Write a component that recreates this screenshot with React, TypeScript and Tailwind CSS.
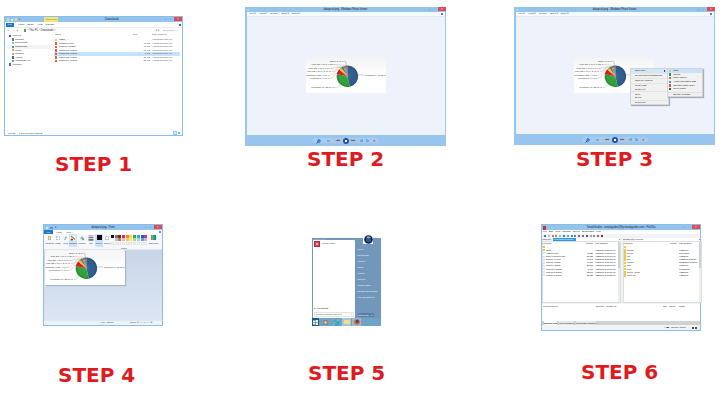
import type { ReactNode } from "react";

/* ---------- shared pieces ---------- */

function Step({ n, className }: { n: number; className: string }) {
  return (
    <h2 className={`font-['DejaVu_Sans',sans-serif] text-[20px] font-bold leading-[24px] whitespace-nowrap text-[#df1b1f] ${className}`}>
      STEP {n}
    </h2>
  );
}

function Controls() {
  return (
    <div className="flex h-full w-[17px] shrink-0 items-start text-[3px] leading-[4px] text-[#31506b]">
      <span className="w-[5px]">–</span>
      <span className="w-[4px]">▫</span>
      <span className="flex h-[4px] w-[8px] items-center justify-center bg-[#e04a50] text-[3px] text-white">×</span>
    </div>
  );
}

function Title({ icon, children }: { icon?: ReactNode; children: ReactNode }) {
  return (
    <header className="flex h-[5px] shrink-0 items-center bg-[#92c4ee] text-[2.55px] text-[#0c2030]">
      <div className="flex w-[17px] items-center gap-[2px]">{icon}</div>
      <div className="flex-1 text-center leading-[5px]">{children}</div>
      <Controls />
    </header>
  );
}

const labels: [number, number, string][] = [
  [38, 3.8, "Other: 3.48 %"],
  [29.5, 7.3, "Mac OS X 10.6: 1.85 %"],
  [26.5, 10.9, "Mac OS X 10.7: 1.64 %"],
  [25, 14.3, "Mac OS X 10.9: 3.46 %"],
  [23.5, 17.8, "Windows Vista: 4.17 %"],
  [23.5, 21.3, "Windows 8: 7.47 %"],
  [28, 30.3, "Windows XP: 23.66 %"],
];

const slices: [number, number, string][] = [
  [0, 167, "#315f91"],
  [167, 281, "#31a43a"],
  [281, 309, "#dc2025"],
  [309, 325, "#f3c51e"],
  [325, 338, "#3d83bd"],
  [338, 347, "#e58132"],
  [347, 353, "#4a78a6"],
  [353, 360, "#77685f"],
];

function point(a: number) {
  const t = (a * Math.PI) / 180;
  return `${(41.4 + 10.7 * Math.sin(t)).toFixed(2)} ${(18.3 - 10.7 * Math.cos(t)).toFixed(2)}`;
}

function PieChart({ className = "" }: { className?: string }) {
  return (
    <svg viewBox="0 0 80 35" className={`h-[35px] w-[80px] shrink-0 ${className}`} fontSize="2.3" fill="#333">
      <defs>
        <linearGradient id="paper" x2="0" y2="1">
          <stop stopColor="#f4f4f4" />
          <stop offset=".55" stopColor="#fff" />
        </linearGradient>
        <radialGradient id="shade">
          <stop stopColor="#fff" stopOpacity=".12" />
          <stop offset=".75" stopColor="#000" stopOpacity="0" />
          <stop offset="1" stopColor="#000" stopOpacity=".2" />
        </radialGradient>
      </defs>
      <rect width="80" height="35" fill="url(#paper)" />
      {labels.map(([x, y, t]) => (
        <text key={t} x={x} y={y} textAnchor="end">{t}</text>
      ))}
      <text x="58.8" y="17.5">Windows 7: 48.62 %</text>
      <g fill="none" strokeWidth=".4">
        <path d="M38.5 3c1.8 0 1.5 2 1.8 4.8" stroke="#777" />
        <path d="M30 6.6c5 0 7 .3 8.7 1.8" stroke="#d6a38d" />
        <path d="M27 10c5 0 6-2 10-1.1" stroke="#87b4d8" />
        <path d="M26 13.5c4 0 5-5 9-4" stroke="#df8383" />
        <path d="M24 17c4 0 5-6 9-5.2" stroke="#e2a27c" />
        <path d="M24 20.5c4 0 3-5 7-5.2" stroke="#dc8787" />
        <path d="M28.5 29.5c3 0 4-1 5.3-3" stroke="#64b56c" />
        <path d="M52 16.8h6" stroke="#789aba" />
      </g>
      {slices.map(([a, b, color]) => (
        <path key={a} d={`M41.4 18.3L${point(a)}A10.7 10.7 0 0 1 ${point(b)}Z`} fill={color} />
      ))}
      <circle cx="41.4" cy="18.3" r="10.7" fill="url(#shade)" />
    </svg>
  );
}

/* ---------- step 1: file explorer ---------- */

const nav: [string, string, boolean][] = [
  ["This PC", "bg-[#2b5cab]", false],
  ["Desktop", "bg-[#4b86a4]", true],
  ["Documents", "bg-[#b8ad86]", true],
  ["Downloads", "bg-[#4592bf]", true],
  ["Music", "bg-[#c9ae5f]", true],
  ["Pictures", "bg-[#b5a764]", true],
  ["Videos", "bg-[#55606b]", true],
  ["Windows8 (C:)", "bg-[#4dadc4]", true],
  ["Network", "bg-[#2f69b0]", false],
];

const files: [string, string, string][] = [
  ["TEST_A", "", "4/28/2013 8:28 PM"],
  ["Capture1.png", "47 KB", "4/28/2013 2:37 PM"],
  ["Capture (JPEG)", "43 KB", "4/28/2013 2:37 PM"],
  ["Capture1 (JPEG)", "21 KB", "4/28/2013 2:38 PM"],
  ["Capture2 (JPEG)", "5 KB", "4/28/2013 2:37 PM"],
  ["Capture3 (JPEG)", "12 KB", "4/28/2013 2:37 PM"],
  ["Capture4 (JPEG)", "23 KB", "4/28/2013 2:37 PM"],
];

function Explorer() {
  return (
    <section className="flex h-[120px] w-[179px] flex-col border border-[#8abdea] bg-white text-[2.4px] text-[#222]">
      <header className="flex h-[5px] shrink-0 bg-[#92c4ee] text-[#0c2030]">
        <div className="flex w-[39px] items-center gap-[2px] pl-[2px]">
          <i className="h-[3px] w-[2px] bg-[#f0d891]" />
          <i className="h-[2px] w-[2px] bg-[#d9e9f6]" />
          <i className="h-[3px] w-[2px] bg-[#f3d374]" />
          <span>▾</span>
        </div>
        <div className="h-[5px] w-[14px] bg-[#f6e676] text-center text-[2px] leading-[5px] text-[#716b37]">Picture Tools</div>
        <div className="flex-1 pl-[47px] text-[2.8px] leading-[5px]">Downloads</div>
        <Controls />
      </header>
      <div className="grid h-[5px] shrink-0 grid-cols-[12px_9.5px_10px_8px_12px_1fr_4px] items-center pl-[1px] leading-[4px]">
        <span className="h-[4px] w-[8px] bg-[#1c78cb] text-center text-white">File</span>
        <span>Home</span><span>Share</span><span>View</span><span>Manage</span>
        <span className="text-right">^</span><i className="ml-[1px] h-[2px] w-[2px] bg-[#2876c4]" />
      </div>
      <div className="flex h-[6px] shrink-0 items-center gap-[2.5px] border-t border-[#eceef0] px-[2px] leading-[4px]">
        <span className="text-[#777]">←</span><span className="text-[#777]">→</span><span>▾</span><span>↑</span>
        <div className="flex h-[4px] flex-1 items-center gap-[1.5px] text-[2.6px]">
          <i className="h-[3px] w-[2px] bg-[#5f9b63]" /><span>› This PC › Downloads ›</span>
        </div>
        <span>▾ ↻</span><span className="w-[18px] pl-[1px] text-[#777]">Search Do... ⌕</span>
      </div>
      <div className="flex flex-1 leading-[3.58px]">
        <nav className="w-[49px] pt-[1.2px] pl-[2px]">
          {nav.map(([name, color, child]) => (
            <div key={name} className={`flex h-[3.58px] items-center gap-[1.3px] ${child ? "pl-[2.5px]" : ""} ${name === "Downloads" ? "bg-[#f3f3f3]" : ""}`}>
              <i className={`ml-[2px] h-[2.4px] w-[2.4px] ${color}`} />{name}
            </div>
          ))}
        </nav>
        <div className="flex-1 pt-[0.3px]">
          <div className="mb-[1.1px] grid h-[3.6px] grid-cols-[78px_19px_1fr] pl-[1px] text-[#3f5870]">
            <span>Name</span><span>Size</span><span>Date modified</span>
          </div>
          {files.map(([name, size, date], i) => (
            <div key={name} className={`mr-[2px] grid h-[3.58px] grid-cols-[4px_60px_31px_1fr] items-center pl-[1px] ${i === 4 ? "bg-[#c4e3fa]" : ""}`}>
              <i className={i ? "h-[2.4px] w-[2.4px] bg-[#dd633d]" : "h-[2.4px] w-[2.4px] bg-[#f1cf69]"} />
              <span>{name}</span><span className="text-right text-[#555]">{size}</span><span className="pl-[2px] text-[#555]">{date}</span>
            </div>
          ))}
        </div>
      </div>
      <footer className="flex h-[5px] items-center gap-[4px] pl-[3px] text-[2.2px] leading-[4px]">
        <span>7 items</span><span className="flex-1">1 item selected 5.23 KB</span>
        <i className="h-[4px] w-[4px] border border-[#8fd2ea] bg-[#c6ecf9]" /><i className="-ml-[3px] mr-[2px] h-[2px] w-[2px] bg-[#8baabd]" />
      </footer>
    </section>
  );
}

/* ---------- steps 2 and 3: photo viewer ---------- */

const menu: [string, boolean][] = [
  ["Open with", true],
  ["Set as desktop background", true],
  ["Open file location", true],
  ["Rotate right", false],
  ["Rotate left", true],
  ["Copy", false],
  ["Delete", true],
  ["Properties", false],
];

const programs: [string, string][] = [
  ["Paint", "bg-[#d8c582]"],
  ["Photos", "bg-[#178ba4]"],
  ["Photo Gallery", "bg-[#d66a3f]"],
  ["Adobe Photoshop CS5", "bg-[#3d9bc9]"],
  ["Microsoft Office 2010", "bg-[#d95a50]"],
  ["Movie Maker", "bg-[#594d4c]"],
];

function ContextMenu() {
  return (
    <div className="absolute top-[56px] left-[114px] flex items-start text-[2.25px] leading-[3.7px] text-black">
      <div className="h-[37px] w-[39px] border border-[#d4d4d4] bg-[#f1f1f1] shadow-[1px_1px_1px_#a9afb8]">
        {menu.map(([name, rule], i) => (
          <div key={name} className={`pl-[4.5px] ${rule ? "mb-[0.3px] border-b border-[#e4e4e4]" : ""} ${i === 0 ? "bg-[#d4e7f8]" : ""}`}>
            <div className="flex h-[3.7px] items-center justify-between pr-[2px]">
              <span>{name}</span>
              {i === 0 && <svg viewBox="0 0 2 2" className="h-[2px] w-[2px]"><path d="M0 0l1.500 1L0 2z" /></svg>}
            </div>
          </div>
        ))}
      </div>
      <div className="-ml-[2px] h-[29px] w-[36px] border border-[#d4d4d4] bg-[#f1f1f1] shadow-[1px_1px_1px_#a9afb8]">
        {programs.map(([name, color], i) => (
          <div key={name} className={`flex h-[3.68px] items-center gap-[2.5px] pl-[1px] ${i === 0 ? "bg-[#c9e2f7]" : ""}`}>
            <i className={`h-[2.4px] w-[2.2px] ${color}`} /><span>{name}</span>
          </div>
        ))}
        <div className="mt-[1px] border-t border-[#e0e0e0] pl-[5.5px]">Choose Program...</div>
      </div>
    </div>
  );
}

function PhotoViewer({ withMenu = false }: { withMenu?: boolean }) {
  return (
    <section className={`flex w-[201px] flex-col bg-[#97c5ed] ${withMenu ? "h-[138px]" : "h-[139px]"}`}>
      <Title icon={<i className="ml-[2px] h-[2px] w-[2px] bg-[#b9d7ed]" />}>datapicol.png - Windows Photo Viewer</Title>
      <div className="relative mx-[1.5px] flex flex-1 flex-col items-center bg-[#edf2fb]">
        <div className="grid h-[5px] w-full grid-cols-[10px_11px_11px_10px_1fr_4px] items-center border-b border-[#e3e9f3] bg-[#f6f9fd] pl-[3px] text-[2.5px] leading-[4px] text-[#22364d]">
          <span>File ▾</span><span>Print ▾</span><span>E-mail</span><span>Burn ▾</span><span>Open ▾</span>
          <i className="h-[2.5px] w-[2.5px] rounded-full bg-[#2855ae]" />
        </div>
        <PieChart className={withMenu ? "mt-[41px] mr-[1px]" : "mt-[41px]"} />
        {withMenu && <ContextMenu />}
      </div>
      <div className="flex h-[11px] shrink-0 items-center justify-center">
        <div className="grid h-[5px] w-[66px] grid-cols-[11px_9px_26px_6px_6px_8px] items-center justify-items-center rounded-full bg-[#a5cdf0] text-[4px] leading-[4px] text-[#1c51a8]">
          <svg viewBox="0 0 5 5" className="h-[5px] w-[5px]" fill="none" stroke="#1c51b8"><circle cx="3" cy="2" r="1.200" /><path d="M2 3L.5 4.500" /></svg>
          <i className="h-[2px] w-[3px] bg-[#86a8c6]" />
          <div className="flex items-center text-[2.4px] text-[#1c3f8a]">
            <span className="h-[4px] w-[10px] rounded-l-full bg-[#b3c6d8] text-center leading-[4px]">|◀◀</span>
            <span className="grid h-[6px] w-[6px] place-items-center rounded-full bg-[#1f4fb0]"><i className="h-[2px] w-[2px] bg-white" /></span>
            <span className="h-[4px] w-[10px] rounded-r-full bg-[#b3c6d8] text-center leading-[4px]">▶▶|</span>
          </div>
          <span>↺</span><span>↻</span><span className="font-bold text-[#dc2932]">×</span>
        </div>
      </div>
    </section>
  );
}

/* ---------- step 4: paint ---------- */

const swatches = [
  "bg-[#111]", "bg-[#777]", "bg-[#8b1b24]", "bg-[#e62b31]", "bg-[#f3883b]", "bg-[#f2dc2d]", "bg-[#37a654]", "bg-[#38a8dd]", "bg-[#3c50ba]", "bg-[#984ba0]",
  "bg-[#fff]", "bg-[#c3c3c3]", "bg-[#b58364]", "bg-[#efaeca]", "bg-[#f5cb50]", "bg-[#ebe5b6]", "bg-[#b7df49]", "bg-[#9bd7e6]", "bg-[#7795be]", "bg-[#c5b8dd]",
  "bg-[#fafafa]", "bg-[#fafafa]", "bg-[#fafafa]", "bg-[#fafafa]", "bg-[#fafafa]", "bg-[#fafafa]", "bg-[#fafafa]", "bg-[#fafafa]", "bg-[#fafafa]", "bg-[#fafafa]",
];

function Tool({ label, width, active, children }: { label: string; width: string; active?: boolean; children: ReactNode }) {
  return (
    <div className={`flex h-[13px] shrink-0 flex-col items-center gap-[1px] pt-[0.5px] ${width} ${active ? "bg-[#cbe3f8]" : ""}`}>
      <div className="flex h-[6px] items-center">{children}</div>
      <span className="leading-[3px]">{label}</span>
    </div>
  );
}

function Paint() {
  return (
    <section className="flex h-[102px] w-[120px] flex-col border border-[#8abdea] bg-[#f7f9fc] text-[2px] text-[#222c38]">
      <Title icon={<><i className="ml-[2px] h-[2px] w-[2px] bg-[#dce6ea]" /><i className="h-[2px] w-[3px] bg-[#7a85c5]" /><span>▾</span></>}>datapicol.png - Paint</Title>
      <div className="flex h-[4px] shrink-0 items-center bg-white text-[2.3px] leading-[4px]">
        <span className="mr-[3px] h-[4px] w-[9px] bg-[#1c78cb] text-center text-white">File</span><span className="w-[10px]">Home</span><span className="flex-1">View</span><i className="mr-[1px] h-[2px] w-[2px] rounded-full bg-[#276fb9]" />
      </div>
      <div className="h-[16px] shrink-0 border-b border-[#dde4ec] bg-[#f5f7fa]">
        <div className="flex h-[13px] items-start pl-[1px]">
          <Tool label="Clipboard" width="w-[9px]"><i className="h-[4px] w-[3px] border border-[#c9b78e] bg-[#f4f3ef]" /></Tool>
          <Tool label="Image" width="w-[8px]"><i className="h-[4px] w-[4px] border border-dotted border-[#b9c8d6]" /></Tool>
          <Tool label="Tools" width="w-[7px]"><svg viewBox="0 0 5 6" className="h-[6px] w-[5px]"><path d="M1 5L3 1l1 1-2 3z" fill="#9aa6b3" /></svg></Tool>
          <Tool label="Brushes" width="w-[8px]" active><svg viewBox="0 0 6 6" className="h-[6px] w-[6px]"><rect x=".5" y=".5" width="5" height="5" fill="#fff" /><path d="M1 1l4 3.5" stroke="#c77446" strokeWidth="1.3" /><path d="M.5 5.5c0-2.5 2.5-2.5 2.5-1s-1 1-2.5 1" fill="#8f4a2b" /></svg></Tool>
          <Tool label="Shapes" width="w-[10px]"><svg viewBox="0 0 6 6" className="h-[6px] w-[6px]"><path d="M1 4l2-3 2 3z" fill="#89b1d7" /><circle cx="4" cy="4" r="1.2" fill="#7fa792" /></svg></Tool>
          <Tool label="Size" width="w-[8px]"><svg viewBox="0 0 6 6" className="h-[6px] w-[6px]" fill="#6b7480"><path d="M.5.5h5v.8h-5zM.5 2h5v1.2h-5zM.5 4h5v1.7h-5z" /></svg></Tool>
          <Tool label="Color 1" width="w-[8px]" active><i className="h-[5px] w-[5px] bg-[#050505]" /></Tool>
          <Tool label="Color 2" width="w-[8px]"><i className="h-[4px] w-[4px] border border-[#ccc] bg-white" /></Tool>
          <div className="grid w-[38px] grid-cols-[repeat(10,3.7px)] gap-y-[0.7px] pt-[0.5px]">
            {swatches.map((color, i) => <i key={i} className={`h-[3px] w-[3px] ${i > 19 ? "border border-[#e3e5e8]" : ""} ${color}`} />)}
          </div>
          <Tool label="Edit colors" width="w-[9px]"><i className="h-[5px] w-[5px] bg-linear-to-r from-red-500 via-green-500 to-blue-600" /></Tool>
        </div>
        <div className="-mt-[0.5px] pl-[77px] leading-[3px]">Colors</div>
      </div>
      <div className="flex-1 bg-linear-to-b from-[#c7d6e8] to-[#dde6f3] pl-[1px]">
        <PieChart className="shadow-[1px_1px_1px_#a4b6c9]" />
      </div>
      <footer className="grid h-[4px] shrink-0 grid-cols-[27px_27px_31px_1fr] items-center bg-[#f0f2f5] px-[1px] text-[2.4px] leading-[4px]">
        <span>+</span><span>▫</span><span>▫ 471 × 209px</span><span>100% ⊖ ——▪—— ⊕</span>
      </footer>
    </section>
  );
}

/* ---------- step 5: start menu ---------- */

const places = ["User1", "Documents", "Pictures", "Music", "Games", "This PC", "Control Panel", "Devices and Printers", "Help and Support"];

function StartMenu() {
  return (
    <section className="relative flex h-[88px] w-[69px] flex-col bg-[#7197bb] text-[2.2px]">
      <div className="h-[2px] pl-[1px] text-[1.8px] leading-[2px] text-[#b4cbe0]">Search the web</div>
      <div className="flex h-[78px]">
        <div className="ml-[1px] flex w-[42px] flex-col rounded-[1px] bg-white text-[#333]">
          <div className="flex items-center gap-[1.5px] pt-[1px] pl-[0.5px]">
            <svg viewBox="0 0 6 6" className="h-[6px] w-[6px] shrink-0"><rect width="6" height="6" fill="#c32032" /><path d="M3 1v4M1 3h4M1.5 1.5l3 3m0-3l-3 3" stroke="#f4dfe2" strokeWidth=".5" /></svg>
            <span>YouTube Store</span>
          </div>
          <div className="flex-1" />
          <div className="mb-[2px] pl-[1px] leading-[4px] text-black">▸ All Programs</div>
          <div className="mx-[1px] mb-[1px] flex h-[5px] items-center justify-between border border-[#e0e5ea] bg-[#fafafa] px-[1px] leading-[3px] text-[#555]"><span>Search programs and files</span><span>⌕</span></div>
        </div>
        <div className="flex flex-1 flex-col pt-[5.5px] pl-[2.5px] text-white">
          {places.map((place, i) => (
            <div key={place} className={`h-[6px] leading-[6px] ${i === 6 ? "mt-[0.5px]" : ""}`}>{place}</div>
          ))}
          <div className="mt-auto mb-[1px] flex h-[4px] w-[16px] items-center justify-between bg-[#5b80a4] px-[1px] leading-[4px]"><span>Shut down</span><span>▸</span></div>
        </div>
      </div>
      <div className="mt-auto flex h-[8px] items-center bg-[#6fa3c6]">
        <div className="grid h-full w-[7px] place-items-center bg-[#235978]"><svg viewBox="0 0 5 5" className="h-[5px] w-[5px]" fill="#fff"><path d="M0 .5h2.2v1.8H0zM2.7 0H5v2.3H2.7zM0 2.7h2.2v1.8H0zM2.7 2.7H5V5H2.7z" /></svg></div>
        <div className="grid w-[12px] place-items-center"><svg viewBox="0 0 5 5" className="h-[5px] w-[5px]"><rect width="5" height="5" fill="#4d93cf" /><circle cx="2.5" cy="2.5" r="2" fill="#f58b35" /><path d="M2 1.5l1.5 1L2 3.5z" fill="#fff" /></svg></div>
        <div className="grid w-[11px] place-items-center"><svg viewBox="0 0 7 7" className="h-[7px] w-[7px]" fill="none"><path d="M5.4 4.7A2 2.1 0 1 1 5.5 3.600H2" stroke="#15a4dc" strokeWidth="1.3" /><path d="M.8 6Q1 2.5 6.2.9" stroke="#e8d65a" strokeWidth=".6" /></svg></div>
        <div className="grid h-full w-[9px] place-items-center bg-[#a5c8d9]"><i className="h-[4px] w-[6px] bg-[#f4dd86]" /></div>
        <div className="ml-[1px] grid h-full w-[9px] place-items-center bg-[#97bdd3]"><svg viewBox="0 0 6 6" className="h-[6px] w-[6px]"><circle cx="3" cy="3" r="3" fill="#ea6b21" /><circle cx="3.2" cy="2.4" r="1.6" fill="#26539a" /></svg></div>
      </div>
      <div className="absolute -top-[4px] right-[8px] grid h-[10px] w-[10px] place-items-center bg-white">
        <svg viewBox="0 0 9 9" className="h-[9px] w-[9px]"><circle cx="4.5" cy="4.5" r="4.3" fill="#101f44" /><circle cx="4.5" cy="4.7" r="2.6" fill="#29539a" /><path d="M2 2.5Q4.5 0 7 2.5Q4.5 3.8 2 2.5" fill="#9ba8be" /></svg>
      </div>
    </section>
  );
}

/* ---------- step 6: FTP client ---------- */

const local: [string, string, string][] = [
  ["..", "", ""], ["TEST_A", "", "4/28/2013 8:28:03 PM"], ["Adaptive.png", "41,825", "4/28/2013 6:05:57 PM"], ["Back to Desktop.png", "21,285", "4/28/2013 6:09:57 PM"], ["Capture (1).png", "43,843", "4/28/2013 2:38:03 PM"], ["Capture (JPEG)", "43,375", "4/28/2013 2:38:03 PM"], ["Capture (JPEG)", "26,808", "4/28/2013 2:38:11 PM"], ["Capture1 (JPEG)", "5,361", "4/28/2013 2:37:03 PM"], ["Capture2 (JPEG)", "12,803", "4/28/2013 2:37:05 PM"], ["Capture3 (JPEG)", "23,625", "4/28/2013 2:37:22 PM"],
];
const remote: [string, string][] = [
  ["..", ""], ["awstats", "4/28/2013"], ["cgi-bin", "12/17/2007"], ["css", "4/28/2013"], ["files", "4/28/2013 8:38:05 ..."], ["images", "12/28/2013 7:38:05 ..."], ["blog", "4/28/2013"], ["store", "17/12/2012"], ["picture_library", "4/28/2013"], ["photo site", "4/28/2013"],
];
const toolColors = ["bg-[#4277b1]", "bg-[#aebccd]", "bg-[#de7a38]", "bg-[#7f94ac]", "bg-[#92b9d8]", "bg-[#298ca0]", "bg-[#4ab0a0]", "bg-[#3f90c9]", "bg-[#45a161]", "bg-[#9b4f68]", "bg-[#4e8c5d]", "bg-[#565656]", "bg-[#a0a8b0]", "bg-[#659ac6]", "bg-[#be5c3f]", "bg-[#444b52]"];

function Scrollbar() {
  return <div className="flex w-[2px] shrink-0 flex-col bg-[#eeeeef]"><i className="h-[26px] bg-[#cfd1d4]" /></div>;
}

function FtpClient() {
  return (
    <section className="flex h-[107px] w-[160px] flex-col border border-[#8abdea] bg-[#f2f3f5] text-[2.1px] text-[#111]">
      <Title icon={<i className="ml-[0.5px] h-[4px] w-[3px] bg-[#cb2e2d]" />}>TweakGuides - tweakguides@ftp.tweakguides.com - FileZilla</Title>
      <div className="flex h-[4px] shrink-0 items-center gap-[2px] bg-white pl-[1px] text-[2.4px] leading-[4px]"><span>File</span><span>Edit</span><span>View</span><span>Transfer</span><span>Server</span><span>Bookmarks</span><span>Help</span></div>
      <div className="flex h-[4px] shrink-0 items-center gap-[1.8px] pl-[2px]">{toolColors.map((c, i) => <i key={i} className={`h-[2px] w-[2px] ${c}`} />)}</div>
      <div className="flex h-[3px] shrink-0 items-center leading-[3px]">
        <span className="w-[11px]">Local site:</span><span className="h-[3px] w-[23px] bg-[#3394de] text-[1.7px] text-white">C:\Users\Store\Downloads\</span><span className="h-[3px] w-[44px] bg-white text-right">▾</span><span className="ml-[3px] w-[12px]">Remote site:</span><span className="flex h-[3px] flex-1 justify-between bg-white"><span>/Pictures</span><span>▾</span></span>
      </div>
      <div className="grid h-[62px] shrink-0 grid-cols-[79px_1fr] gap-[2px]">
        <div className="flex border border-[#dcdfe2] bg-white leading-[3.15px]">
          <div className="flex-1">
            <div className="mb-[0.3px] grid h-[3.3px] grid-cols-[36px_14px_1fr]"><span>Filename</span><span className="text-right">Filesize</span><span className="pl-[2px]">Last modified</span></div>
            {local.map(([name, size, date], i) => (
              <div key={i} className="grid h-[3.15px] grid-cols-[3px_33px_14px_1fr] items-center">
                <i className={i < 2 ? "h-[2px] w-[2px] bg-[#f1c743]" : "h-[2px] w-[2px] bg-[#dce3e9]"} /><span>{name}</span><span className="text-right">{size}</span><span className="pl-[2px]">{date}</span>
              </div>
            ))}
          </div>
          <Scrollbar />
        </div>
        <div className="flex border border-[#dcdfe2] bg-white leading-[3.15px]">
          <div className="flex-1">
            <div className="mb-[0.3px] grid h-[3.3px] grid-cols-[46px_9px_1fr]"><span>Filename</span><span>Filesize</span><span>Last modified</span></div>
            {remote.map(([name, date]) => (
              <div key={name} className="grid h-[3.15px] grid-cols-[3px_52px_1fr] items-center"><i className="h-[2.5px] w-[2px] bg-[#f1c743]" /><span>{name}</span><span>{date}</span></div>
            ))}
          </div>
          <Scrollbar />
        </div>
      </div>
      <div className="mt-[1px] flex-1 bg-white">
        <div className="grid grid-cols-[53px_10px_57px_6px_10px_1fr] pl-[1px] leading-[4px]"><span>Server/Local file</span><span>Direction</span><span>Remote file</span><span>Size</span><span>Priority</span><span>Status</span></div>
      </div>
      <div className="flex h-[4px] shrink-0 gap-[2px] bg-[#cfd1d3] pl-[2px] text-[2.2px] leading-[4px]"><span className="bg-white font-bold text-[#111]">Queued files</span><span className="bg-[#e6e7e8]">Failed transfers</span><span className="bg-[#e6e7e8]">Successful transfers</span></div>
      <footer className="flex h-[5px] shrink-0 items-center justify-end gap-[2px] pr-[3px] text-[2.4px] leading-[4px]"><span>▯ ▬</span><span className="mr-[4px]">Queue: empty</span><i className="h-[2px] w-[2px] bg-[#464f42]" /><i className="-ml-[1px] h-[2px] w-[2px] bg-[#464f42]" /></footer>
    </section>
  );
}

export default function App() {
  return (
    <main className="grid h-[400px] w-[725px] grid-cols-[240px_270px_215px] grid-rows-[217px_183px] overflow-hidden bg-white font-['Liberation_Sans','DejaVu_Sans',sans-serif] whitespace-nowrap">
      <article className="pt-[16px] pl-[4px]"><Explorer /><Step n={1} className="mt-[16px] ml-[51px]" /></article>
      <article className="pt-[7px] pl-[5px]"><PhotoViewer /><Step n={2} className="mt-[1px] ml-[62px]" /></article>
      <article className="pt-[7px] pl-[4px]"><PhotoViewer withMenu /><Step n={3} className="mt-[2px] ml-[62px]" /></article>
      <article className="pt-[7px] pl-[43px]"><Paint /><Step n={4} className="mt-[37px] ml-[15px]" /></article>
      <article className="pt-[21px] pl-[72px]"><StartMenu /><Step n={5} className="mt-[35px] -ml-[4px]" /></article>
      <article className="pt-[7px] pl-[31px]"><FtpClient /><Step n={6} className="mt-[29px] ml-[40px]" /></article>
    </main>
  );
}
